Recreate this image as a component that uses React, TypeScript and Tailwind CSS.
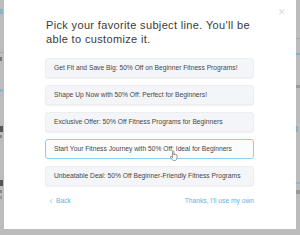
import { ChevronLeft } from "lucide-react";

const options = [
    "Get Fit and Save Big: 50% Off on Beginner Fitness Programs!",
    "Shape Up Now with 50% Off: Perfect for Beginners!",
    "Exclusive Offer: 50% Off Fitness Programs for Beginners",
    "Start Your Fitness Journey with 50% Off: Ideal for Beginners",
    "Unbeatable Deal: 50% Off Beginner-Friendly Fitness Programs",
];

const HandCursor = () => (
    <svg width="8" height="10" viewBox="0 0 16 20" className="absolute left-[124px] top-[11px]">
        <path
            d="M5 1.5c0-.8.6-1.5 1.4-1.5S7.8.7 7.8 1.5V8l.2-1.2c.6-.6 1.8-.5 2.2.3.5-.5 1.6-.5 2 .3.6-.3 1.7 0 1.8.9V14c0 3-2 5-5 5H8c-2 0-3.2-1-4.2-2.4L1 12.3c-.4-.7-.2-1.5.5-1.9.6-.3 1.4-.1 1.8.4L5 13V1.5z"
            fill="#fff"
            stroke="#555"
            strokeWidth="1.2"
        />
    </svg>
);

const App = () => {
    return (
        <div className="flex h-[235px] w-[300px] overflow-hidden bg-[#bcbcbc] font-['Liberation_Sans',Arial,sans-serif]">
            {/* page behind the overlay, only a sliver shows */}
            <div className="flex w-[4px] flex-col overflow-hidden">
                <span className="mt-[9px] h-[5px] w-[3px] bg-[#8eb2c8]" />
                <span className="mt-[38px] h-[1px] w-[4px] bg-[#a9a9a9]" />
                <span className="mt-[4px] h-[4px] w-[2px] bg-[#777]" />
                <span className="mt-[28px] h-[3px] w-[3px] bg-[#8fb6cc]" />
                <span className="mt-[34px] h-[6px] w-[3px] bg-[#555]" />
                <span className="mt-[3px] h-[3px] w-[2px] bg-[#888]" />
                <span className="mt-[42px] h-[6px] w-[3px] bg-[#555]" />
                <span className="mt-[4px] h-[3px] w-[2px] bg-[#888]" />
                <span className="mt-[3px] h-[3px] w-[2px] bg-[#999]" />
            </div>

            <div className="relative flex h-[229px] w-[292px] flex-col bg-white pl-[42px] pr-[42px] pt-[18px] text-[#3d3d3d]">
                <span className="absolute right-[10px] top-[8px] text-[9px] leading-none text-[#d9d9d9]">✕</span>
                <h2 className="text-[11px] leading-[14px] tracking-[0.35px] text-[#3a3a3a]">
                    Pick your favorite subject line. You'll be able to customize it.
                </h2>

                <div className="-ml-[1px] mt-[12px] flex flex-col gap-[7px]">
                    {options.map((option, i) => (
                        <div
                            key={option}
                            className={
                                i === 3
                                    ? "relative flex h-[20px] items-center rounded-[3px] border border-[#8fcbee] bg-[#fafcfe] pl-[8px] text-[6.7px] text-[#474747]"
                                    : "relative flex h-[20px] items-center rounded-[3px] border border-[#eceef2] bg-[#f4f5f8] pl-[8px] text-[6.7px] text-[#474747] shadow-[0_1px_1px_rgba(0,0,0,0.06)]"
                            }
                        >
                            {option}
                            {i === 3 ? <HandCursor /> : null}
                        </div>
                    ))}
                </div>

                <div className="mt-[10px] flex items-center justify-between text-[6.7px] text-[#5ab4e6]">
                    <span className="flex items-center gap-[2px] pl-[2px]">
                        <ChevronLeft size={6} strokeWidth={2.5} />
                        Back
                    </span>
                    <span>Thanks, I'll use my own</span>
                </div>
            </div>

            <div className="flex w-[4px] flex-col overflow-hidden">
                <span className="mt-[38px] h-[1px] w-[4px] bg-[#a8a8a8]" />
                <span className="mt-[14px] h-[2px] w-[4px] bg-[#7fb0cc]" />
                <span className="mt-[30px] h-[3px] w-[4px] bg-[#9a9a9a]" />
                <span className="mt-[38px] h-[6px] w-[2px] bg-[#7fb0cc]" />
                <span className="mt-[50px] h-[2px] w-[4px] bg-[#8fb6cc]" />
                <span className="mt-[6px] h-[4px] w-[4px] bg-[#999]" />
            </div>
        </div>
    );
};

export default App;
